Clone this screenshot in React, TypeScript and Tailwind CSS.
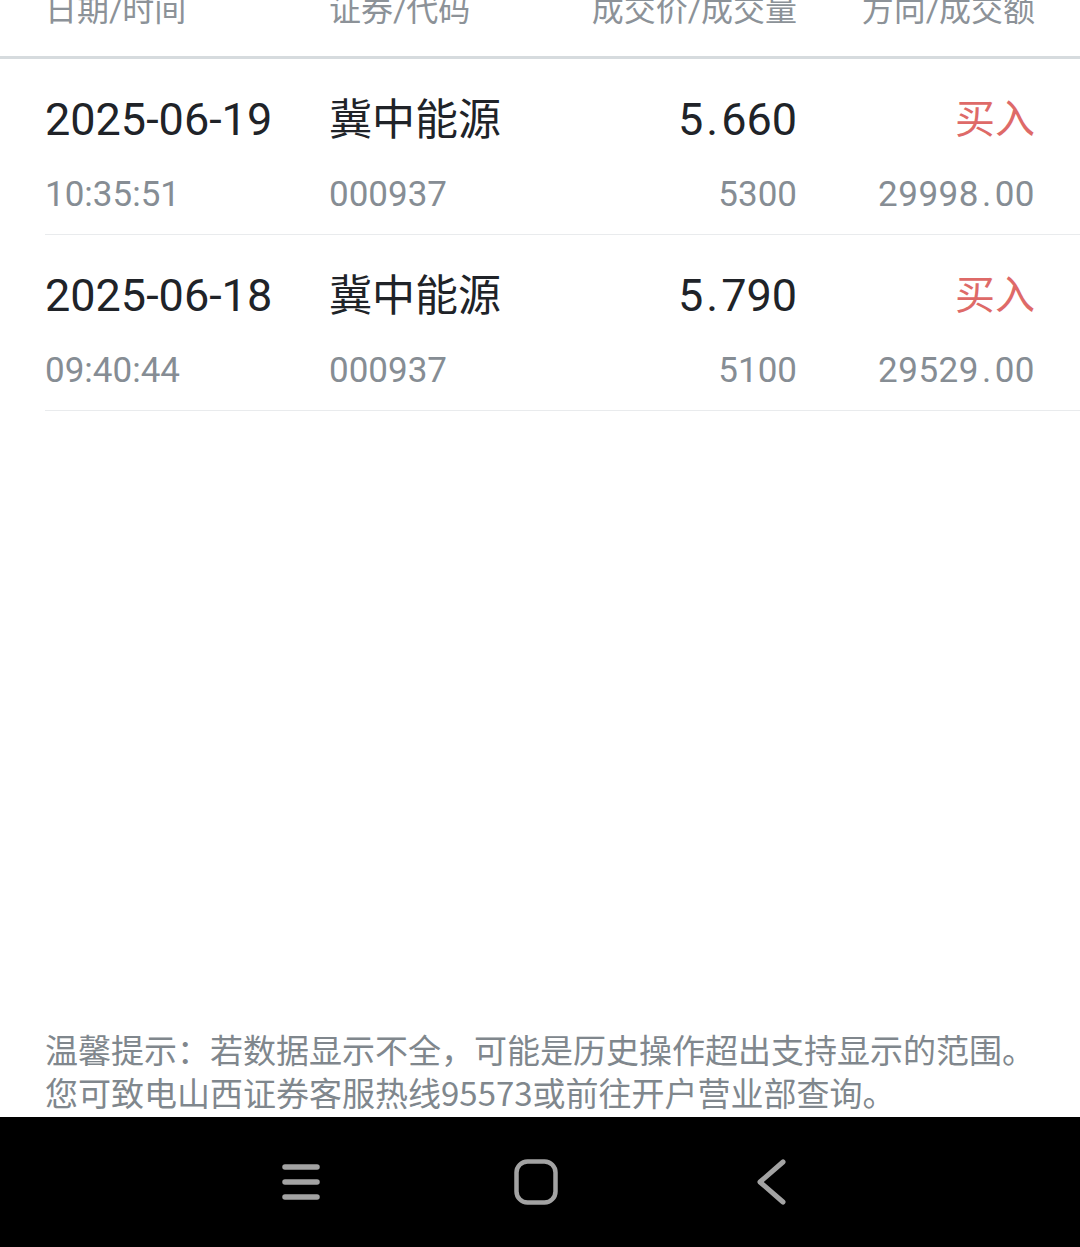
const trades = [
  { date: "2025-06-19", time: "10:35:51", name: "冀中能源", code: "000937", price: "5.660", volume: "5300", side: "买入", amount: "29998.00" },
  { date: "2025-06-18", time: "09:40:44", name: "冀中能源", code: "000937", price: "5.790", volume: "5100", side: "买入", amount: "29529.00" },
];

const cols = "grid grid-cols-[284px_200px_268px_238px]";
const font = { fontFamily: "Roboto, 'Noto Sans CJK SC', sans-serif" };

// the app font draws a wider period than Roboto
function Num({ value }: { value: string }) {
  const [a, b] = value.split(".");
  if (b === undefined) return <>{value}</>;
  return (
    <>
      {a}
      <span className="px-[3px]">.</span>
      {b}
    </>
  );
}

function NavBar() {
  return (
    <div className="h-[130px] bg-black flex items-center justify-center pr-[8px]">
      {/* menu */}
      <div className="w-[235px] flex justify-center">
        <svg width="40" height="38" viewBox="0 0 40 38" fill="none" stroke="#a3a3a3" strokeWidth="5.5" strokeLinecap="round">
          <line x1="4" y1="4" x2="36" y2="4" />
          <line x1="4" y1="19" x2="36" y2="19" />
          <line x1="4" y1="34" x2="36" y2="34" />
        </svg>
      </div>
      {/* home */}
      <div className="w-[235px] flex justify-center">
        <svg width="44" height="46" viewBox="0 0 44 46" fill="none" stroke="#a3a3a3" strokeWidth="4.5">
          <rect x="2.5" y="2.5" width="39" height="41" rx="11" />
        </svg>
      </div>
      {/* back */}
      <div className="w-[235px] flex justify-center">
        <svg width="30" height="46" viewBox="0 0 30 46" fill="none" stroke="#a3a3a3" strokeWidth="5" strokeLinecap="round" strokeLinejoin="round">
          <polyline points="27,3 4,23 27,43" />
        </svg>
      </div>
    </div>
  );
}

export default function App() {
  return (
    <div className="h-[1247px] bg-white flex flex-col overflow-hidden" style={font}>
      {/* Header (scrolled, top cut off) */}
      <div className={`${cols} px-[45px] -mt-[6px] pb-[30px] border-b-[3px] border-[#d6dbde] text-[32px] leading-[32px] text-[#8c9298]`}>
        <div>日期/时间</div>
        <div>证券/代码</div>
        <div className="text-right">成交价/成交量</div>
        <div className="text-right">方向/成交额</div>
      </div>

      {/* Rows */}
      <div className="pl-[45px]">
        {trades.map((t) => (
          <div key={t.date} className={`${cols} pr-[45px] pt-[36px] pb-[19px] border-b border-[#e9ebed]`}>
            <div>
              <div className="text-[45px] leading-[50px] text-[#202328]">{t.date}</div>
              <div className="text-[35px] leading-[40px] mt-[30px] text-[#868d94]">{t.time}</div>
            </div>
            <div>
              <div className="text-[43px] leading-[50px] text-[#202328]">{t.name}</div>
              <div className="text-[35px] leading-[40px] mt-[30px] text-[#868d94]">{t.code}</div>
            </div>
            <div className="text-right">
              <div className="text-[45px] leading-[50px] text-[#202328]">
                <Num value={t.price} />
              </div>
              <div className="text-[35px] leading-[40px] mt-[30px] text-[#868d94]">{t.volume}</div>
            </div>
            <div className="text-right">
              <div className="text-[40px] leading-[50px] text-[#de6a68]">{t.side}</div>
              <div className="text-[35px] leading-[40px] mt-[30px] text-[#868d94] tracking-[0.5px]">
                <Num value={t.amount} />
              </div>
            </div>
          </div>
        ))}
      </div>

      <div className="flex-1" />

      {/* Notice */}
      <div
        className="px-[45px] pb-[3px] text-[33px] leading-[43px] text-[#80878d] whitespace-nowrap"
        style={{ fontFamily: "'Noto Sans CJK SC', sans-serif" }}
      >
        温馨提示：若数据显示不全，可能是历史操作超出支持显示的范围。
        <br />
        您可致电山西证券客服热线95573或前往开户营业部查询。
      </div>

      <NavBar />
    </div>
  );
}
